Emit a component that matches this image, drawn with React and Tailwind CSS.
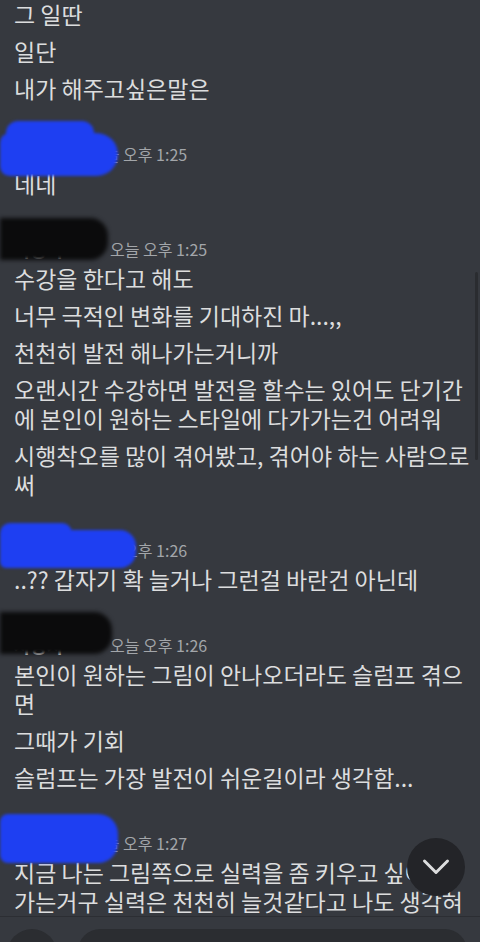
import React from 'react';

// each message is a list of its visual lines (wraps as on the phone)
const groups = [
  {
    header: null,
    messages: [['그 일딴'], ['일단'], ['내가 해주고싶은말은']],
  },
  {
    header: { kind: 'blue', time: '오늘 오후 1:25' },
    messages: [['네네']],
  },
  {
    header: { kind: 'black', time: '오늘 오후 1:25' },
    messages: [
      ['수강을 한다고 해도'],
      ['너무 극적인 변화를 기대하진 마...,,'],
      ['천천히 발전 해나가는거니까'],
      ['오랜시간 수강하면 발전을 할수는 있어도 단기간', '에 본인이 원하는 스타일에 다가가는건 어려워'],
      ['시행착오를 많이 겪어봤고, 겪어야 하는 사람으로', '써'],
    ],
  },
  {
    header: { kind: 'blue3', time: '오늘 오후 1:26' },
    messages: [['..?? 갑자기 확 늘거나 그런걸 바란건 아닌데']],
  },
  {
    header: { kind: 'black4', time: '오늘 오후 1:26' },
    messages: [
      ['본인이 원하는 그림이 안나오더라도 슬럼프 겪으', '면'],
      ['그때가 기회'],
      ['슬럼프는 가장 발전이 쉬운길이라 생각함...'],
    ],
  },
  {
    header: { kind: 'blue5', time: '오늘 오후 1:27' },
    messages: [['지금 나는 그림쪽으로 실력을 좀 키우고 싶어서', '가는거구 실력은 천천히 늘것같다고 나도 생각혀']],
  },
];

// scribbled-out usernames
const Redaction = ({ kind }) => {
  if (kind === 'blue') {
    return (
      <div className="absolute -left-[14px] -top-[18px] w-[118px] h-[56px] blur-[1.5px] pointer-events-none">
        <div className="absolute left-[6px] top-0 w-[88px] h-[24px] rounded-[14px] bg-[#1e3ff2]" />
        <div className="absolute left-0 top-[12px] w-[118px] h-[43px] rounded-r-[22px] rounded-l-[10px] bg-[#1e3ff2]" />
      </div>
    );
  }
  if (kind === 'blue3') {
    return (
      <div className="absolute -left-[14px] -top-[12px] w-[136px] h-[45px] blur-[1.5px] pointer-events-none">
        <div className="absolute left-0 top-0 w-[72px] h-[20px] rounded-[10px] bg-[#1e3ff2]" />
        <div className="absolute left-0 top-[7px] w-[136px] h-[38px] rounded-r-[16px] rounded-l-[6px] bg-[#1e3ff2]" />
      </div>
    );
  }
  if (kind === 'blue5') {
    return (
      <div className="absolute -left-[14px] -top-[14px] w-[118px] h-[49px] rounded-r-[20px] rounded-l-[8px] bg-[#1e3ff2] blur-[1.5px] pointer-events-none" />
    );
  }
  if (kind === 'black') {
    return (
      <div className="absolute -left-[14px] -top-[16px] w-[108px] h-[42px] rounded-r-[18px] bg-[#0b0b0c] blur-[2px] pointer-events-none" />
    );
  }
  return (
    <div className="absolute -left-[14px] -top-[18px] w-[112px] h-[42px] rounded-r-[18px] bg-[#0b0b0c] blur-[2px] pointer-events-none" />
  );
};

const Header = ({ kind, time }) => {
  const isBlue = kind.startsWith('blue');
  return (
    <div className="relative h-[30px] flex items-center">
      <span
        className={
          isBlue
            ? 'w-[70px] overflow-hidden whitespace-nowrap text-[18px] font-bold text-white'
            : 'w-[90px] overflow-hidden whitespace-nowrap text-[18px] font-bold text-white'
        }
      >
        사용자
      </span>
      <span className="ml-[6px] text-[16px] text-[#a3a6aa]">{time}</span>
      <Redaction kind={kind} />
    </div>
  );
};

const App = () => {
  return (
    <div className="relative w-[480px] h-[942px] overflow-hidden bg-[#36393f] flex flex-col font-['Noto_Sans_CJK_KR','Noto_Sans',sans-serif]">
      <div className="flex-1 overflow-hidden pl-[14px] pr-[12px] flex flex-col gap-[36px]">
        {groups.map((g, i) => (
          <div key={i}>
            {g.header && <Header kind={g.header.kind} time={g.header.time} />}
            <div className="flex flex-col gap-[8px]">
              {g.messages.map((lines, j) => (
                <p key={j} className="text-[23px] leading-[29px] text-[#dcddde] whitespace-nowrap">
                  {lines.map((line, k) => (
                    <React.Fragment key={k}>
                      {k > 0 && <br />}
                      {line}
                    </React.Fragment>
                  ))}
                </p>
              ))}
            </div>
          </div>
        ))}
      </div>

      {/* composer */}
      <div className="h-[26px] shrink-0 border-t border-[#2c2e33] overflow-hidden flex items-start pt-[12px] pl-[7px] gap-[21px]">
        <div className="w-[50px] h-[50px] rounded-full bg-[#2b2d31] shrink-0" />
        <div className="w-[389px] h-[44px] rounded-[22px] bg-[#2b2d31] shrink-0" />
      </div>

      {/* jump to bottom */}
      <button className="absolute left-[407px] top-[838px] w-[58px] h-[58px] rounded-full bg-[#232428] flex items-center justify-center">
        <svg width="28" height="18" viewBox="0 0 28 18" fill="none">
          <path d="M2.5 3L14 14.5L25.5 3" stroke="#dcddde" strokeWidth="3" strokeLinecap="round" strokeLinejoin="round" />
        </svg>
      </button>

      {/* scrollbar */}
      <div className="absolute left-[475px] top-[272px] w-[3px] h-[188px] rounded bg-[#2a2c30]" />
    </div>
  );
};

export default App;
